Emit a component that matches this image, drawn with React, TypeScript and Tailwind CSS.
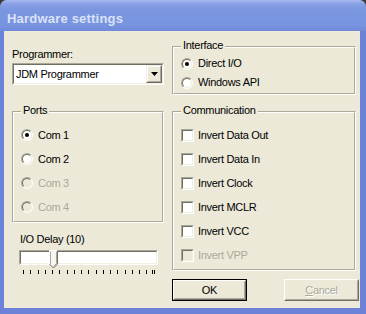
import React from "react";

const FONT = { fontFamily: '"Liberation Sans", Arial, sans-serif' };

function Radio({ checked, disabled }: { checked?: boolean; disabled?: boolean }) {
  return (
    <div className="w-[12px] h-[12px] shrink-0 rounded-full border border-t-[#ACA899] border-l-[#ACA899] border-r-white border-b-white">
      <div
        className={
          disabled
            ? "w-full h-full rounded-full border border-t-[#716F64] border-l-[#716F64] border-r-[#F1EFE2] border-b-[#F1EFE2] bg-[#ECE9D8] flex items-center justify-center"
            : "w-full h-full rounded-full border border-t-[#716F64] border-l-[#716F64] border-r-[#F1EFE2] border-b-[#F1EFE2] bg-white flex items-center justify-center"
        }
      >
        {checked && <div className="w-[4px] h-[4px] rounded-full bg-black" />}
      </div>
    </div>
  );
}

function Check({ disabled }: { disabled?: boolean }) {
  return (
    <div className="w-[13px] h-[13px] shrink-0 border border-t-[#ACA899] border-l-[#ACA899] border-r-white border-b-white">
      <div
        className={
          disabled
            ? "w-full h-full border border-t-[#716F64] border-l-[#716F64] border-r-[#F1EFE2] border-b-[#F1EFE2] bg-[#ECE9D8]"
            : "w-full h-full border border-t-[#716F64] border-l-[#716F64] border-r-[#F1EFE2] border-b-[#F1EFE2] bg-white"
        }
      />
    </div>
  );
}

function Group({ label, className, children }: { label: string; className: string; children: React.ReactNode }) {
  return (
    <div className={"relative border border-t-[#ACA899] border-l-[#ACA899] border-r-white border-b-white " + className}>
      <div className="absolute inset-0 border border-t-white border-l-white border-r-[#ACA899] border-b-[#ACA899] pointer-events-none" />
      <span className="absolute left-[8px] top-[-8px] px-[2px] bg-[#ECE9D8] text-[11px] leading-[13px] text-black">
        {label}
      </span>
      {children}
    </div>
  );
}

export default function App() {
  const ticks: number[] = [];
  for (let i = 0; i < 18; i++) ticks.push(4 + i * 7.25);
  ticks.push(132.5);
  ticks.push(134.5);

  return (
    <div className="w-[366px] h-[314px] bg-[#3b3a33] overflow-hidden" style={FONT}>
      <div className="w-[366px] h-[314px] rounded-t-[7px] bg-[#6c82d8] flex flex-col overflow-hidden">
        <div className="h-[31px] shrink-0 bg-[linear-gradient(180deg,#a9baee_0%,#8aa2e6_12%,#7b97e0_30%,#7894df_80%,#7089da_100%)] pl-[7px] pt-[11px]">
          <div className="text-[13px] leading-[15px] font-bold text-[#d9e2f8] tracking-[0.2px]">Hardware settings</div>
        </div>
        <div className="flex-1 flex pl-[4px] pr-[6px] pb-[6px]">
          <div className="flex-1 bg-[#ECE9D8] flex pl-[8px] text-[11px] leading-[13px] text-black tracking-[-0.3px]">
            {/* Left column */}
            <div className="w-[152px] flex flex-col">
              <div className="mt-[17px]">Programmer:</div>
              <div className="mt-[2px] h-[22px] border border-t-[#ACA899] border-l-[#ACA899] border-r-white border-b-white">
                <div className="h-full border border-t-[#716F64] border-l-[#716F64] border-r-[#F1EFE2] border-b-[#F1EFE2] bg-white flex items-center">
                  <div className="flex-1 pl-[2px]">JDM Programmer</div>
                  <div className="w-[16px] h-[18px] border border-t-[#F1EFE2] border-l-[#F1EFE2] border-r-[#716F64] border-b-[#716F64]">
                    <div className="w-full h-full border border-t-white border-l-white border-r-[#ACA899] border-b-[#ACA899] bg-[#ECE9D8] flex items-center justify-center">
                      <svg width="7" height="4" viewBox="0 0 7 4">
                        <polygon points="0,0 7,0 3.5,4" fill="#000" />
                      </svg>
                    </div>
                  </div>
                </div>
              </div>
              <Group label="Ports" className="mt-[26px] h-[112px] pt-[11px] pl-[8px]">
                <div className="h-[24px] flex items-center gap-[5px]">
                  <Radio checked />
                  <span>Com 1</span>
                </div>
                <div className="h-[24px] flex items-center gap-[5px]">
                  <Radio />
                  <span>Com 2</span>
                </div>
                <div className="h-[24px] flex items-center gap-[5px] text-[#ACA899]">
                  <Radio disabled />
                  <span>Com 3</span>
                </div>
                <div className="h-[24px] flex items-center gap-[5px] text-[#ACA899]">
                  <Radio disabled />
                  <span>Com 4</span>
                </div>
              </Group>
              <div className="mt-[10px] ml-[8px]">I/O Delay (10)</div>
              <div className="relative mt-[4px] ml-[7px] w-[139px] h-[15px] border border-t-[#ACA899] border-l-[#ACA899] border-r-white border-b-white">
                <div className="h-full border border-t-[#716F64] border-l-[#716F64] border-r-[#F1EFE2] border-b-[#F1EFE2] bg-white" />
                <svg className="absolute left-[29px] top-[-1px]" width="10" height="19" viewBox="0 0 10 19">
                  <polygon points="0.5,0.5 8.5,0.5 8.5,14 4.5,18 0.5,14" fill="#f7f6f1" stroke="none" />
                  <polyline points="0.5,14 0.5,0.5 8.5,0.5" fill="none" stroke="#ffffff" />
                  <polyline points="1.5,14 1.5,1.5" fill="none" stroke="#ACA899" />
                  <polyline points="8.5,0.5 8.5,14 4.5,18 0.5,14" fill="none" stroke="#716F64" />
                  <polyline points="7.5,1.5 7.5,13.5 4.5,16.5" fill="none" stroke="#ACA899" />
                </svg>
              </div>
              <svg className="mt-[5px] ml-[7px]" width="140" height="4" viewBox="0 0 140 4">
                {ticks.map((x, i) => (
                  <rect key={i} x={Math.round(x)} y="0" width="1" height="4" fill="#000" />
                ))}
              </svg>
            </div>
            {/* Right column */}
            <div className="ml-[8px] w-[184px] flex flex-col">
              <Group label="Interface" className="mt-[15px] h-[49px] pt-[7px] pl-[8px]">
                <div className="h-[19px] flex items-center gap-[5px]">
                  <Radio checked />
                  <span>Direct I/O</span>
                </div>
                <div className="h-[19px] flex items-center gap-[5px]">
                  <Radio />
                  <span>Windows API</span>
                </div>
              </Group>
              <Group label="Communication" className="mt-[16px] h-[160px] pt-[11px] pl-[8px]">
                {["Invert Data Out", "Invert Data In", "Invert Clock", "Invert MCLR", "Invert VCC"].map((t) => (
                  <div key={t} className="h-[24px] flex items-center gap-[4px]">
                    <Check />
                    <span>{t}</span>
                  </div>
                ))}
                <div className="h-[24px] flex items-center gap-[4px] text-[#ACA899]">
                  <Check disabled />
                  <span>Invert VPP</span>
                </div>
              </Group>
              <div className="mt-[8px] flex justify-between w-[187px]">
                <div className="w-[75px] h-[22px] border border-black">
                  <div className="w-full h-full border border-t-white border-l-white border-r-[#716F64] border-b-[#716F64]">
                    <div className="w-full h-full border border-r-[#ACA899] border-b-[#ACA899] border-t-transparent border-l-transparent bg-[#ECE9D8] flex items-center justify-center">
                      OK
                    </div>
                  </div>
                </div>
                <div className="w-[75px] h-[22px] border border-t-white border-l-white border-r-[#716F64] border-b-[#716F64]">
                  <div className="w-full h-full border border-r-[#ACA899] border-b-[#ACA899] border-t-transparent border-l-transparent bg-[#ECE9D8] flex items-center justify-center text-[#ACA899] [text-shadow:1px_1px_0_#fff]">
                    <span>
                      <span className="underline">C</span>ancel
                    </span>
                  </div>
                </div>
              </div>
            </div>
          </div>
        </div>
      </div>
    </div>
  );
}
